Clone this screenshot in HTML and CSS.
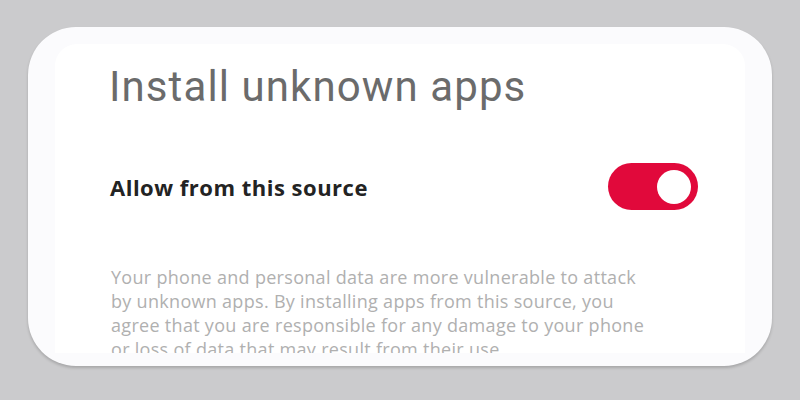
FILE: index.html
```html
<!DOCTYPE html>
<html lang="en">

<head>
    <meta charset="UTF-8">
    <title>Install unknown apps</title>
    <link rel="stylesheet" href="styles.css">
</head>

<body>
    <div class="card">
        <div class="sheet">
            <h1 class="title">Install unknown apps</h1>
            <!--开关-->
            <div class="row">
                <span class="label">Allow from this source</span>
                <div class="switch on"><div class="knob"></div></div>
            </div>
            <p class="desc">Your phone and personal data are more vulnerable to attack by unknown apps. By installing apps from this source, you agree that you are responsible for any damage to your phone or loss of data that may result from their use.</p>
        </div>
    </div>
</body>

</html>
```

FILE: styles.css
```css
html,
body {
    margin: 0;
    width: 100%;
    height: 100%;
    background: #cbcbcd;
    font-family: Roboto, "Liberation Sans", sans-serif;
}

body {
    box-sizing: border-box;
    padding: 27px 28px 34px 28px;
}

.card {
    box-sizing: border-box;
    height: 339px;
    background: #fbfbfd;
    border-radius: 48px;
    padding: 17px 27px 13px 27px;
    box-shadow: 0 2px 3px rgba(0, 0, 0, 0.18);
}

.sheet {
    box-sizing: border-box;
    height: 100%;
    background: #fff;
    border-radius: 22px 22px 0 0;
    overflow: hidden;
    padding: 18px 47px 0 54px;
}

.title {
    margin: 0;
    font-size: 42px;
    line-height: 50px;
    font-weight: 400;
    letter-spacing: 1.1px;
    color: #6b6b6b;
}

.row {
    display: flex;
    align-items: center;
    justify-content: space-between;
    margin-top: 51px;
    padding-left: 1px;
}

.label {
    font-family: "Open Sans", Roboto, sans-serif;
    font-size: 22px;
    font-weight: 700;
    letter-spacing: 0.5px;
    color: #232323;
}

.switch {
    width: 90px;
    height: 47px;
    border-radius: 24px;
    background: #ccc;
    display: flex;
    align-items: center;
    padding: 0 7px;
    box-sizing: border-box;
}

.switch.on {
    background: #e1093b;
    justify-content: flex-end;
}

.knob {
    width: 34px;
    height: 34px;
    border-radius: 50%;
    background: #fff;
}

.desc {
    margin: 55px 0 0 2px;
    max-width: 546px;
    font-family: "Open Sans", Roboto, sans-serif;
    font-size: 18px;
    line-height: 24px;
    letter-spacing: 0.3px;
    color: #b0b0b0;
}
```
